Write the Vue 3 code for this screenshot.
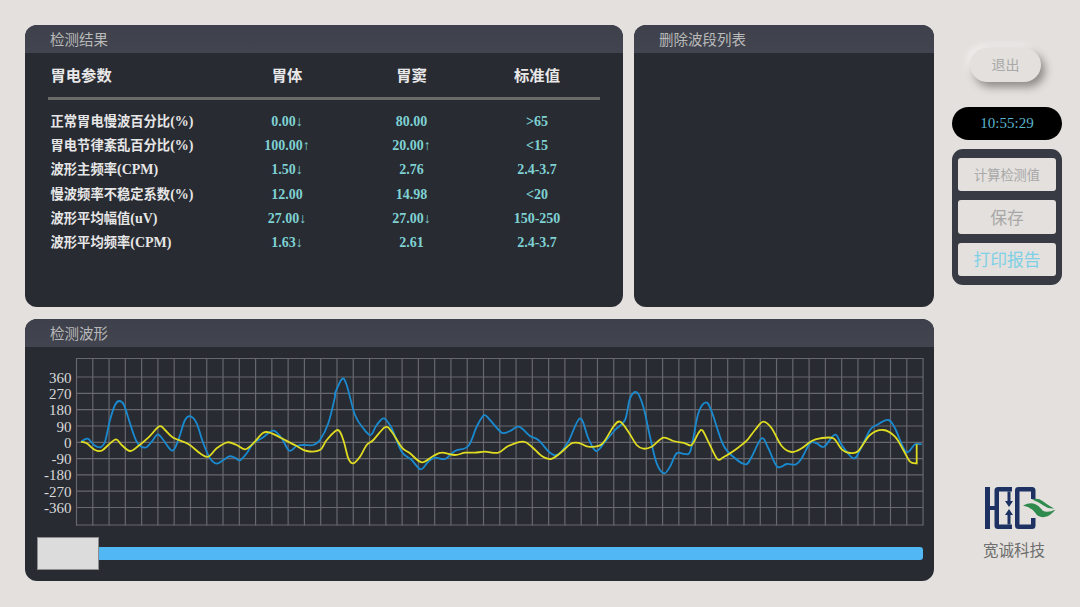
<script setup>
const rows = [
  ['正常胃电慢波百分比', '(%)', '0.00↓', '80.00', '>65'],
  ['胃电节律紊乱百分比', '(%)', '100.00↑', '20.00↑', '<15'],
  ['波形主频率', '(CPM)', '1.50↓', '2.76', '2.4-3.7'],
  ['慢波频率不稳定系数', '(%)', '12.00', '14.98', '<20'],
  ['波形平均幅值', '(uV)', '27.00↓', '27.00↓', '150-250'],
  ['波形平均频率', '(CPM)', '1.63↓', '2.61', '2.4-3.7'],
]
const vLines = Array.from({ length: 53 }, (_, i) => 76.5 + i * 16.28)
const hLines = [358.5, 377, 393.3, 409.7, 426, 442.3, 458.6, 474.9, 491.2, 507.5, 525]
const labels = [['360', 378], ['270', 394], ['180', 410.5], ['90', 427], ['0', 443], ['-90', 459], ['-180', 475.5], ['-270', 492], ['-360', 508]]

const conv = (pts, ox, oy) => pts.map(([x, y]) => [ox + x / 3, oy + y / 3])
const blue = [
  ...conv([[183,305],[203,296],[222,315],[240,322],[255,305],[270,240],[285,195],[298,183],[312,195],[330,250],[350,305],[375,323],[395,305],[413,283],[430,300],[457,332],[475,300],[495,240],[512,229],[530,250],[550,310],[570,355],[590,371],[610,360],[628,349],[645,353],[660,361],[680,340],[700,310],[725,295],[745,280],[762,272],[785,295],[808,332],[830,318],[850,315],[880,315],[900,300],[925,250],[945,170]], 20, 340),
  ...conv([[45,130],[66,87],[80,105],[105,195],[130,235],[152,255],[170,225],[192,205],[215,235],[245,305],[275,330],[302,358],[325,335],[345,323],[375,327],[405,303],[445,288],[470,230],[492,196],[510,210],[545,248],[570,243],[597,230],[630,258],[655,270],[690,308],[715,313],[745,275],[780,205],[805,265],[828,303],[855,275],[885,240]], 320, 350),
  ...conv([[15,210],[30,145],[50,127],[70,170],[90,260],[110,340],[132,370],[150,350],[170,310],[195,312],[212,300],[235,190],[258,157],[275,185],[310,285],[345,325],[378,343],[395,320],[425,265],[445,295],[472,350],[500,342],[528,343],[545,325],[570,280],[590,280],[612,290],[645,254],[665,285],[700,325],[720,300],[750,240],[770,225],[805,210],[825,235],[858,305],[885,283],[905,283]], 620, 350),
]
const yellow = [
  ...conv([[183,305],[200,310],[225,330],[245,332],[265,315],[288,298],[305,315],[330,333],[355,318],[385,293],[418,259],[435,270],[460,293],[505,312],[540,340],[565,350],[590,325],[622,307],[650,315],[675,328],[700,310],[730,278],[755,280],[785,295],[830,318],[860,333]], 20, 340),
  ...conv([[0,300],[20,270],[53,240],[70,270],[85,325],[100,340],[120,320],[140,285],[160,270],[195,232],[215,245],[245,292],[270,310],[305,337],[340,318],[365,308],[405,315],[435,308],[465,308],[495,305],[535,308],[565,288],[610,275],[635,290],[665,318],[692,327],[720,310],[755,280],[780,280],[805,290],[845,283],[880,230]], 320, 350),
  ...conv([[0,215],[25,245],[50,285],[70,296],[95,290],[130,263],[160,273],[195,280],[215,285],[235,250],[247,241],[265,275],[292,327],[310,322],[345,300],[380,272],[405,240],[430,215],[455,235],[485,288],[515,306],[545,295],[575,273],[600,265],[640,265],[665,298],[690,309],[715,303],[750,255],[790,240],[825,260],[850,300],[870,335],[890,340]], 620, 350),
]
function smooth(p) {
  let d = `M${p[0][0].toFixed(1)} ${p[0][1].toFixed(1)}`
  for (let i = 0; i < p.length - 1; i++) {
    const a = p[Math.max(i - 1, 0)], b = p[i], c = p[i + 1], e = p[Math.min(i + 2, p.length - 1)]
    const c1x = b[0] + (c[0] - a[0]) / 6, c1y = b[1] + (c[1] - a[1]) / 6
    const c2x = c[0] - (e[0] - b[0]) / 6, c2y = c[1] - (e[1] - b[1]) / 6
    d += `C${c1x.toFixed(1)} ${c1y.toFixed(1)} ${c2x.toFixed(1)} ${c2y.toFixed(1)} ${c[0].toFixed(1)} ${c[1].toFixed(1)}`
  }
  return d
}
const bluePath = smooth(blue)
const yellowPath = smooth(yellow) + 'L916.7 444.3'
</script>

<template>
  <div class="page">
    <main class="main">
      <section class="panel">
        <h2 class="panel-title">检测结果</h2>
        <div class="table">
          <div class="thead">
            <span class="first">胃电参数</span><span>胃体</span><span>胃窦</span><span>标准值</span>
          </div>
          <div class="tbody">
            <div v-for="r in rows" :key="r[0]" class="row">
              <span class="first">{{ r[0] }}<span class="unit">{{ r[1] }}</span></span>
              <span class="val">{{ r[2] }}</span>
              <span class="val">{{ r[3] }}</span>
              <span class="val">{{ r[4] }}</span>
            </div>
          </div>
        </div>
      </section>
      <section class="panel">
        <h2 class="panel-title">删除波段列表</h2>
      </section>
      <section class="panel wave">
        <h2 class="panel-title">检测波形</h2>
        <svg class="chart" viewBox="25 347 909 180" width="909" height="180">
          <line v-for="x in vLines" :key="'v' + x" :x1="x" :x2="x" y1="358" y2="525.5" class="grid" />
          <line v-for="y in hLines" :key="'h' + y" x1="76" x2="923" :y1="y" :y2="y" class="grid" />
          <text v-for="l in labels" :key="l[0]" x="71.500" :y="l[1] + 4.5" text-anchor="end" class="axis">{{ l[0] }}</text>
          <path :d="bluePath" class="blue" />
          <path :d="yellowPath" class="yellow" />
        </svg>
        <div class="slider">
          <div class="thumb"></div>
          <div class="track"></div>
        </div>
      </section>
    </main>

    <aside class="side">
      <button class="exit">退出</button>
      <div class="clock">10:55:29</div>
      <div class="actions">
        <button class="act small">计算检测值</button>
        <button class="act">保存</button>
        <button class="act print">打印报告</button>
      </div>
      <div class="logo">
        <svg width="72" height="42" viewBox="0 0 72 42">
          <g fill="#1d3263">
            <path d="M0 0h5v42H0z" />
            <path d="M5 19h6v4H5z" />
            <path d="M27 0H13q-3.500 0-3.500 3.500v35q0 3.500 3.500 3.500h14v-4.500H14v-33h13z" />
            <path d="M22.500 4.500h3V14H28l-4 6-4-6h2.500zM22.500 37.500h3V28H28l-4-6-4 6h2.500z" />
            <path d="M50.500 12V3.500Q50.500 0 47 0H33.500Q30 0 30 3.500v35q0 3.500 3.500 3.500H47q3.500 0 3.500-3.500V31H46v6.500H34.500v-33H46V12z" />
          </g>
          <path d="M47 12.500q6-2 10.500 1.500t11.500 7.500q-6 .5-10.500-3t-11.500-6z" fill="#2f8a4e" />
          <path d="M38 18.500q7-3.500 12-1.500t7.500 6.500q5 3 13-1-5 6.500-11 7.500t-9.500-4.500q-4-5.500-12-7z" fill="#2f8a4e" />
        </svg>
        <div class="logo-text">宽诚科技</div>
      </div>
    </aside>
  </div>
</template>

<style scoped>
.page {
  width: 1080px;
  height: 607px;
  background: #e3e0dd;
  display: flex;
  box-sizing: border-box;
  padding: 25px 0 0 25px;
  overflow: hidden;
  font-family: "Liberation Serif", "Noto Sans CJK SC", serif;
}
.main {
  display: grid;
  grid-template-columns: 598px 300px;
  grid-template-rows: 282px 262px;
  gap: 12px 11px;
  align-self: flex-start;
}
.panel {
  background: #282b32;
  border-radius: 12px;
  overflow: hidden;
  position: relative;
}
.panel-title {
  margin: 0;
  height: 28px;
  line-height: 30px;
  padding-left: 25px;
  background: linear-gradient(#3e414b, #42454f);
  color: #b9b9b9;
  font-size: 14.500px;
  font-weight: 400;
}
.table { padding: 10px 23px 0; }
.thead, .row {
  display: grid;
  grid-template-columns: 177px 124px 125px 126px;
  text-align: center;
}
.thead {
  height: 34px;
  line-height: 26px;
  font-size: 15.300px;
  font-weight: 700;
  color: #e8e8e8;
  border-bottom: 3px solid #6a6a6a;
}
.first { text-align: left; padding-left: 2.500px; }
.tbody { padding-top: 10px; }
.row {
  height: 24.200px;
  line-height: 24px;
  font-size: 13.300px;
  font-weight: 700;
  color: #e6e6e6;
}
.unit { font-size: 14px; }
.val { color: #7fd1d2; font-size: 14px; }
.wave { grid-column: 1 / span 2; }
.chart { display: block; }
.grid { stroke: #66686d; stroke-width: 1.200; }
.axis { fill: #d9d9d9; font-size: 15px; font-family: "Liberation Serif", serif; }
.blue { fill: none; stroke: #1a8ad0; stroke-width: 1.800; }
.yellow { fill: none; stroke: #dfdc22; stroke-width: 1.800; }
.slider {
  display: flex;
  align-items: center;
  margin: 10px 11px 0 11.500px;
}
.thumb {
  width: 62px;
  height: 33px;
  box-sizing: border-box;
  background: #dcdcdc;
  border: 1px solid #8d8d8d;
  flex: none;
}
.track {
  flex: 1;
  height: 13px;
  background: #52b8f5;
  border-radius: 0 3px 3px 0;
}
.side {
  width: 110px;
  margin-left: 18px;
  display: flex;
  flex-direction: column;
  align-items: stretch;
}
.exit {
  align-self: flex-start;
  margin: 23px 0 0 18px;
  width: 71px;
  height: 34px;
  padding: 0 0 2px;
  border: none;
  border-radius: 17px;
  background: #e3e0dd;
  color: #a9a9a9;
  font-family: "Noto Sans CJK SC", sans-serif;
  font-size: 14px;
  box-shadow: 4px 5px 8px #8d8b88, -3px -3px 6px #f2f0ee;
}
.clock {
  margin-top: 25px;
  height: 33px;
  line-height: 33px;
  border-radius: 17px;
  background: #000;
  color: #5ab5cc;
  text-align: center;
  font-size: 15px;
}
.actions {
  margin-top: 9px;
  height: 136px;
  box-sizing: border-box;
  padding: 9px 6px;
  border-radius: 11px;
  background: #383b43;
  display: flex;
  flex-direction: column;
  gap: 9px;
}
.act {
  flex: 1;
  border: none;
  border-radius: 3px;
  padding: 0;
  background: #e3e0dd;
  color: #a8a8a8;
  font-family: "Noto Sans CJK SC", sans-serif;
  font-size: 16.800px;
}
.small { font-size: 13.200px; }
.print { color: #7fd0e6; }
.logo {
  margin-top: 202px;
  padding-left: 33px;
  display: flex;
  flex-direction: column;
}
.logo-text {
  margin: 9px 0 0 -2px;
  width: 64px;
  font-family: "Noto Sans CJK SC", sans-serif;
  font-size: 15.500px;
  line-height: 22px;
  color: #6e6e6e;
  white-space: nowrap;
}
</style>
